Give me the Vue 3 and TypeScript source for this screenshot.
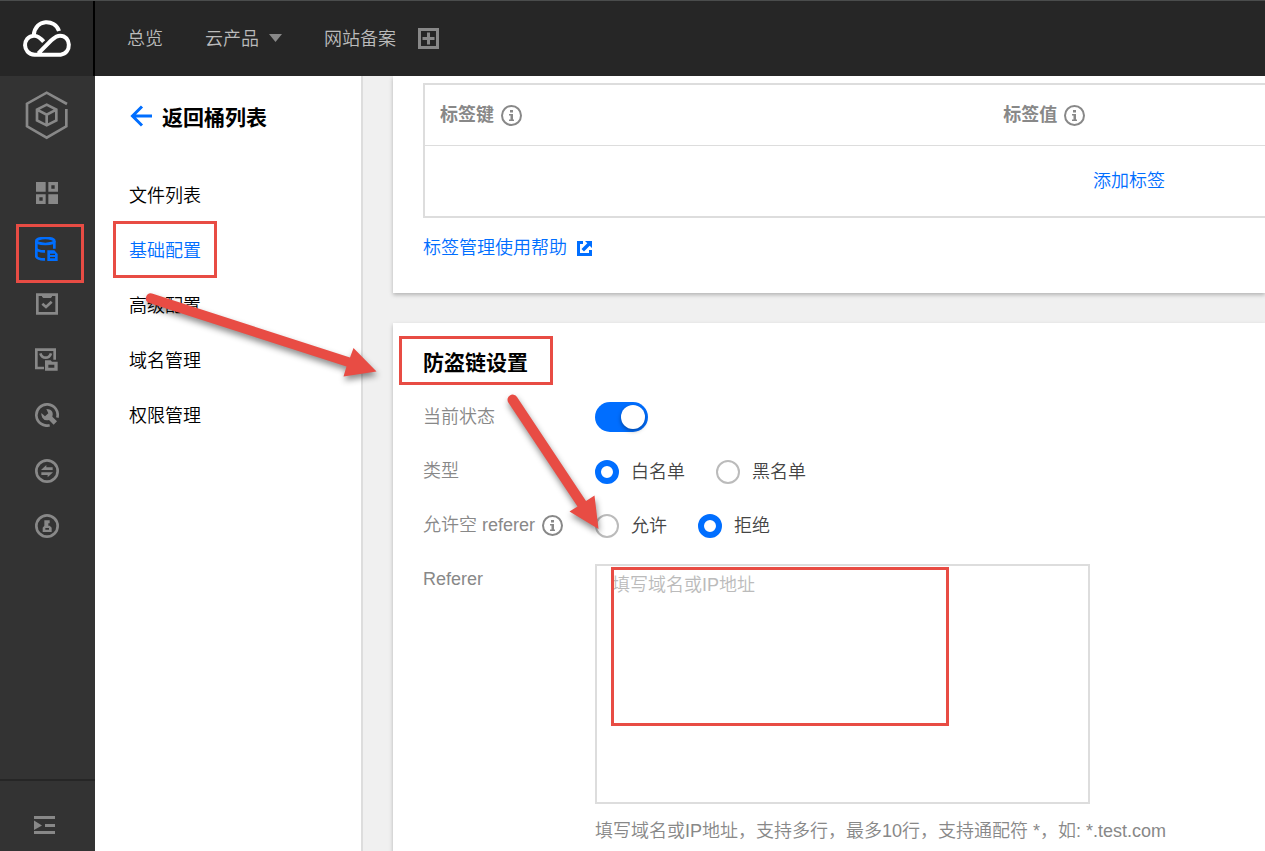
<script setup lang="ts">
import { ref } from 'vue'

const topLinks = ['总览', '云产品', '网站备案']
const menu = ['文件列表', '基础配置', '高级配置', '域名管理', '权限管理']
const activeMenu = ref('基础配置')
const enabled = ref(true)
const listType = ref('white')
const emptyReferer = ref('deny')
const referers = ref('')
</script>

<template>
  <div class="console">
    <header class="topbar">
      <a class="brand" href="#" aria-label="控制台首页">
        <svg width="50" height="39" viewBox="66 57 150 117" fill="none" stroke="#fff" stroke-width="12">
          <path d="M177 93C166 57 106 54 101 106M131 125C120 112 112 106 101 107C66 110 66 162 104 164H182C216 160 214 107 180 107C168 107 162 114 154 121L115 160" />
        </svg>
      </a>
      <nav class="topnav">
        <a v-for="(item, i) in topLinks" :key="item" href="#">
          {{ item }}
          <svg v-if="i === 1" width="13" height="9" viewBox="0 0 13 9"><path d="M0 0H13L6.5 8Z" fill="#888" /></svg>
        </a>
        <button class="add" type="button" aria-label="添加">
          <svg width="21" height="21" viewBox="0 0 21 21" fill="none" stroke="#888" stroke-width="3">
            <path d="M1.5 1.5H19.5V19.5H1.5ZM10.5 4.500V16.500M4.500 10.500H16.500" />
          </svg>
        </button>
      </nav>
    </header>

    <aside class="rail">
      <a class="product" href="#" aria-label="对象存储">
        <svg width="44" height="50" viewBox="76 30 132 150" fill="none" stroke="#888">
          <path stroke-width="8" d="M202 72L141 38L82 71V139L141 173L200 139V87" />
          <path stroke-width="8" d="M141 74L170 89V121L141 136L112 121V89ZM112 89L141 104L170 89M141 104V136" />
        </svg>
      </a>
      <nav class="tools">
        <a href="#" aria-label="概览">
          <svg width="24" height="24" viewBox="105 303 72 72" fill="#888">
            <path fill-rule="evenodd" d="M108 306h29v29h-29zM145 306h29v29h-29zm9 10v10h10v-10zM108 343h29v29h-29zm10 9v10h10v-10zM145 343h29v29h-29z" />
          </svg>
        </a>
        <a href="#" aria-label="存储桶列表">
          <svg width="24" height="24" viewBox="105 472 72 72" fill="none" stroke="#006eff" stroke-width="8">
            <ellipse cx="136" cy="484" rx="27" ry="9" />
            <path d="M109 484V531Q114 540 135 539M109 507Q114 516 135 515M163 484V507" />
            <path fill="#006eff" stroke="none" fill-rule="evenodd" d="M142 512H163L173 523V544H142ZM150 522V526H165V522ZM150 532V536H165V532Z" />
          </svg>
        </a>
        <a href="#" aria-label="任务">
          <svg width="24" height="24" viewBox="105 36 72 72" fill="none" stroke="#888" stroke-width="8">
            <path d="M112 44H170V100H112Z" />
            <path d="M127 71L138 81L155 65" />
            <path fill="#888" stroke="none" d="M126 44H156V50L152 54H130L126 50Z" />
          </svg>
        </a>
        <a href="#" aria-label="迁移">
          <svg width="24" height="24" viewBox="105 203 72 72" fill="none" stroke="#888" stroke-width="8">
            <path d="M132 263H109V208H164V238" />
            <path d="M121 219Q125 232 137 232Q149 232 153 219" />
            <path fill="#888" stroke="none" fill-rule="evenodd" d="M135 240H152L156 244H173V271H135ZM145 253V262H163V253Z" />
          </svg>
        </a>
        <a href="#" aria-label="工具">
          <svg width="24" height="24" viewBox="105 369 72 72" fill="none" stroke="#888" stroke-width="8">
            <path d="M149 436A32 32 0 1 1 172 413" />
            <path fill="#888" stroke="none" d="M139 387Q153 387 157 396Q160 403 157 410L171 424L161 434L147 420Q134 424 127 413Q123 407 124 399L135 409L145 400Z" />
          </svg>
        </a>
        <a href="#" aria-label="传输">
          <svg width="24" height="24" viewBox="105 537 72 72" fill="none" stroke="#888" stroke-width="8">
            <circle cx="141" cy="573" r="32" />
            <path fill="#888" stroke="none" d="M123 570L139 555V562H158V570ZM159 577L143 592V585H124V577Z" />
          </svg>
        </a>
        <a href="#" aria-label="密钥">
          <svg width="24" height="24" viewBox="105 702 72 72" fill="none" stroke="#888" stroke-width="8">
            <circle cx="141" cy="738" r="32" />
            <path fill="#888" stroke="none" fill-rule="evenodd" d="M133 721H149V730H145V737H149L155 743V756H128V743L133 737ZM136 744V749H147V744Z" />
          </svg>
        </a>
      </nav>
      <button class="collapse" type="button" aria-label="展开菜单">
        <svg width="22" height="20" viewBox="0 0 22 20" fill="#888">
          <path d="M0 1H21V4H0ZM0 16H21V19H0ZM11 9H21V12H11ZM0 5.500L8 10.500L0 15Z" />
        </svg>
      </button>
    </aside>

    <aside class="sidebar">
      <a class="back" href="#">
        <svg width="22" height="26" viewBox="0 0 22 26" fill="none" stroke="#006eff" stroke-width="3">
          <path d="M12 1.500L2.500 11L12 20.500M2.500 11H22" />
        </svg>
        <h2>返回桶列表</h2>
      </a>
      <nav>
        <a v-for="item in menu" :key="item" href="#" class="entry" :class="{ active: item === activeMenu }" @click.prevent="activeMenu = item">{{ item }}</a>
      </nav>
    </aside>

    <main class="content">
      <section class="card tags">
        <table>
          <thead>
            <tr>
              <th v-for="name in ['标签键', '标签值']" :key="name">
                <span class="with-info">{{ name }}
                  <svg class="info" width="21" height="21" viewBox="0 0 21 21"><circle cx="10.500" cy="10.500" r="9.500" fill="none" stroke="#888" stroke-width="2" /><path fill="#888" d="M9 5H12V7.500H9ZM8 9H12V14.500H13V16H8V14.500H9.500V10.500H8Z" /></svg>
                </span>
              </th>
              <th class="ops"></th>
            </tr>
          </thead>
          <tbody>
            <tr><td colspan="3"><a href="#">添加标签</a></td></tr>
          </tbody>
        </table>
        <a class="help" href="#">标签管理使用帮助
          <svg width="15" height="15" viewBox="0 0 15 15" fill="#006eff"><path d="M0 0H6V3H3V12H12V9H15V15H0ZM8 0H15V7L12.700 4.700L7 10.500L4.500 8L10.300 2.300Z" /></svg>
        </a>
      </section>

      <section class="card settings">
        <h2>防盗链设置</h2>
        <form @submit.prevent>
          <label class="name" for="status">当前状态</label>
          <div class="field"><input id="status" v-model="enabled" class="switch" type="checkbox" role="switch" /></div>

          <span id="type-name" class="name">类型</span>
          <div class="field options" role="radiogroup" aria-labelledby="type-name">
            <label class="option"><input v-model="listType" type="radio" name="type" value="white" />白名单</label>
            <label class="option"><input v-model="listType" type="radio" name="type" value="black" />黑名单</label>
          </div>

          <span id="empty-name" class="name with-info">允许空 referer
            <svg class="info" width="21" height="21" viewBox="0 0 21 21"><circle cx="10.500" cy="10.500" r="9.500" fill="none" stroke="#888" stroke-width="2" /><path fill="#888" d="M9 5H12V7.500H9ZM8 9H12V14.500H13V16H8V14.500H9.500V10.500H8Z" /></svg>
          </span>
          <div class="field options" role="radiogroup" aria-labelledby="empty-name">
            <label class="option"><input v-model="emptyReferer" type="radio" name="empty" value="allow" />允许</label>
            <label class="option"><input v-model="emptyReferer" type="radio" name="empty" value="deny" />拒绝</label>
          </div>

          <label class="name" for="referer">Referer</label>
          <div>
            <textarea id="referer" v-model="referers" placeholder="填写域名或IP地址"></textarea>
            <p class="hint">填写域名或IP地址，支持多行，最多10行，支持通配符 *，如: *.test.com</p>
          </div>
        </form>
      </section>
    </main>

    <svg class="marks" width="1265" height="851" viewBox="0 0 1265 851" aria-hidden="true">
      <g fill="none" stroke="#e84c44" stroke-width="3">
        <rect x="17.500" y="225.500" width="65" height="56" />
        <rect x="114.500" y="222.500" width="101" height="54" />
        <rect x="400.500" y="337.500" width="151" height="46" />
        <rect x="612.500" y="568.500" width="335" height="156" />
      </g>
      <g class="arrows" fill="#e84c44">
        <path d="M152 293.500L350 357.500L353.500 348L376.500 371.500L343.500 376.500L346.500 366.500L149 303A5 5 0 0 1 152 293.500Z" />
        <path d="M517 397L586 501L594.500 495.500L598.500 529L569.500 511.500L577.500 506.500L508.300 402.500A5 5 0 0 1 517 397Z" />
      </g>
    </svg>
  </div>
</template>

<style>
body {
  margin: 0;
}
</style>

<style scoped>
.console {
  position: relative;
  display: grid;
  grid-template: 76px minmax(0, 1fr) / 95px 268px minmax(0, 1fr);
  height: 100vh;
  overflow: hidden;
  background: #f0f0f0;
  color: #000;
  font: 350 18px/30px "Liberation Sans", "Noto Sans CJK SC", sans-serif;
}
.console * {
  box-sizing: border-box;
}
a {
  color: #006eff;
  text-decoration: none;
}
svg {
  display: block;
  flex: none;
}
button {
  padding: 0;
  border: 0;
  background: none;
  cursor: pointer;
}
h2 {
  margin: 0;
  font-size: 21px;
  font-weight: 700;
  line-height: 30px;
}
.topbar {
  grid-column: 1 / -1;
  z-index: 1;
  display: flex;
  border-top: 1px solid #4a4c4c;
  background: #262626;
}
.brand {
  display: grid;
  place-items: center;
  width: 95px;
  border-right: 2px solid #000;
}
.topnav {
  display: flex;
  align-items: center;
  gap: 42px;
  padding-left: 32px;
}
.topnav a {
  display: flex;
  align-items: center;
  gap: 10px;
  color: #bbb;
}
.topnav .add {
  margin-left: -20px;
}
.rail {
  display: flex;
  flex-direction: column;
  align-items: center;
  padding-right: 2px;
  background: #333;
}
.product {
  margin-top: 14px;
}
.tools {
  display: flex;
  flex-direction: column;
  justify-content: space-between;
  height: 357px;
  margin-top: 41px;
}
.collapse {
  display: grid;
  align-self: stretch;
  place-items: center;
  height: 72px;
  margin: auto -2px 0 0;
  padding: 18px 6px 0 0;
  border-top: 2px solid #262626;
}
.sidebar {
  padding: 27px 0 0 34px;
  border-right: 2px solid #ddd;
  background: #fff;
}
.back {
  display: flex;
  align-items: center;
  gap: 10px;
  margin-bottom: 36px;
  padding-left: 1px;
  color: #000;
}
.entry {
  display: block;
  color: #000;
  line-height: 55px;
}
.entry.active {
  color: #006eff;
}
.content {
  overflow: hidden;
  padding-left: 30px;
}
.card {
  padding: 0 30px;
  background: #fff;
  box-shadow: 0 2px 4px rgba(0, 0, 0, 0.25);
}
.tags {
  overflow: hidden;
  padding-top: 7px;
  padding-bottom: 30px;
}
table {
  width: 100%;
  min-width: 1412px;
  border: 2px solid #ddd;
  border-spacing: 0;
  table-layout: fixed;
}
th {
  width: 40%;
  height: 61px;
  padding: 0 15px;
  border-bottom: 1px solid #ddd;
  color: #888;
  font-weight: 700;
  text-align: left;
}
th.ops {
  width: 20%;
}
td {
  height: 70px;
  padding: 0;
  text-align: center;
}
.with-info {
  display: flex;
  align-items: center;
  gap: 7px;
}
.help {
  display: inline-flex;
  align-items: center;
  gap: 10px;
  margin-top: 15px;
  vertical-align: top;
}
.settings {
  min-height: 100%;
  margin-top: 30px;
  padding-top: 25px;
}
form {
  display: grid;
  grid-template-columns: 172px minmax(0, 1fr);
  row-gap: 24px;
  margin-top: 24px;
}
.name {
  height: 30px;
  color: #888;
}
.field {
  display: flex;
  align-items: center;
  gap: 31px;
  height: 30px;
}
.options {
  padding-top: 2px;
}
.option {
  display: flex;
  align-items: center;
  gap: 12px;
  color: #444;
}
input {
  flex: none;
  margin: 0;
  appearance: none;
}
input[type="radio"] {
  width: 24px;
  height: 24px;
  border: 2px solid #bbb;
  border-radius: 50%;
}
input[type="radio"]:checked {
  border: 6px solid #006eff;
}
.switch {
  display: flex;
  width: 53px;
  height: 30px;
  padding: 3px;
  border-radius: 15px;
  background: #bbb;
}
.switch:checked {
  justify-content: flex-end;
  background: #006eff;
}
.switch::before {
  content: "";
  width: 24px;
  height: 24px;
  border-radius: 50%;
  background: #fff;
  box-shadow: 0 2px 4px rgba(0, 0, 0, 0.35);
}
textarea {
  display: block;
  width: 495px;
  max-width: 100%;
  height: 240px;
  padding: 4px 15px;
  border: 2px solid #ddd;
  border-radius: 0;
  color: #444;
  font: inherit;
  outline: 0;
  resize: none;
}
textarea::placeholder {
  color: #bbb;
}
.hint {
  margin: 12px 0 0;
  color: #888;
}
.marks {
  position: absolute;
  top: 0;
  left: 0;
  z-index: 2;
  pointer-events: none;
}
.arrows {
  filter: drop-shadow(1px 4px 3px rgba(0, 0, 0, 0.45));
}
</style>
